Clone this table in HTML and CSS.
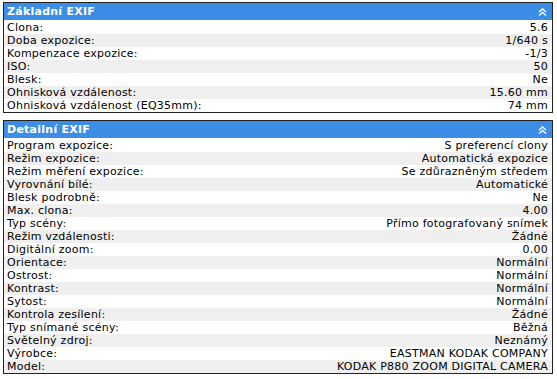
FILE: index.html
```html
<!DOCTYPE html>
<html lang="cs">
<head>
    <meta charset="UTF-8">
    <title>EXIF</title>
    <link rel="stylesheet" href="styles.css">
</head>
<body>
    <div class="panel">
        <div class="panel-head">
            <span>Základní EXIF</span>
            <svg class="fold" width="9" height="8" viewBox="0 0 9 8"><polyline points="1,4 4.5,1 8,4" /><polyline points="1,7.5 4.5,4.5 8,7.5" /></svg>
        </div>
        <table class="exif">
            <tr><td>Clona:</td><td>5.6</td></tr>
            <tr><td>Doba expozice:</td><td>1/640 s</td></tr>
            <tr><td>Kompenzace expozice:</td><td>-1/3</td></tr>
            <tr><td>ISO:</td><td>50</td></tr>
            <tr><td>Blesk:</td><td>Ne</td></tr>
            <tr><td>Ohnisková vzdálenost:</td><td>15.60 mm</td></tr>
            <tr><td>Ohnisková vzdálenost (EQ35mm):</td><td>74 mm</td></tr>
        </table>
    </div>
    <div class="panel">
        <div class="panel-head">
            <span>Detailní EXIF</span>
            <svg class="fold" width="9" height="8" viewBox="0 0 9 8"><polyline points="1,4 4.5,1 8,4" /><polyline points="1,7.5 4.5,4.5 8,7.5" /></svg>
        </div>
        <table class="exif">
            <tr><td>Program expozice:</td><td>S preferencí clony</td></tr>
            <tr><td>Režim expozice:</td><td>Automatická expozice</td></tr>
            <tr><td>Režim měření expozice:</td><td>Se zdůrazněným středem</td></tr>
            <tr><td>Vyrovnání bílé:</td><td>Automatické</td></tr>
            <tr><td>Blesk podrobně:</td><td>Ne</td></tr>
            <tr><td>Max. clona:</td><td>4.00</td></tr>
            <tr><td>Typ scény:</td><td>Přímo fotografovaný snímek</td></tr>
            <tr><td>Režim vzdálenosti:</td><td>Žádné</td></tr>
            <tr><td>Digitální zoom:</td><td>0.00</td></tr>
            <tr><td>Orientace:</td><td>Normální</td></tr>
            <tr><td>Ostrost:</td><td>Normální</td></tr>
            <tr><td>Kontrast:</td><td>Normální</td></tr>
            <tr><td>Sytost:</td><td>Normální</td></tr>
            <tr><td>Kontrola zesílení:</td><td>Žádné</td></tr>
            <tr><td>Typ snímané scény:</td><td>Běžná</td></tr>
            <tr><td>Světelný zdroj:</td><td>Neznámý</td></tr>
            <tr><td>Výrobce:</td><td>EASTMAN KODAK COMPANY</td></tr>
            <tr><td>Model:</td><td>KODAK P880 ZOOM DIGITAL CAMERA</td></tr>
        </table>
    </div>
</body>
</html>
```

FILE: styles.css
```css
* {
    margin: 0;
    padding: 0;
}
body {
    background-color: #fff;
    padding: 2px 4px 0 3px;
    font-family: "DejaVu Sans", Verdana, sans-serif;
    font-size: 11px;
    letter-spacing: 0.25px;
    color: #000;
}
.panel {
    border: 1px solid #222;
    margin-bottom: 7px;
}
.panel-head {
    height: 17px;
    background-color: #3c8de6;
    color: #fff;
    font-weight: bold;
    display: flex;
    align-items: center;
    justify-content: space-between;
    padding: 0 5px 0 3px;
}
.panel-head .fold polyline {
    fill: none;
    stroke: #fff;
    stroke-width: 1.4;
}
.exif {
    width: 100%;
    border-collapse: collapse;
    margin-top: 1px;
}
.exif td {
    height: 13px;
    line-height: 13px;
    padding: 0 4px 0 3px;
    white-space: nowrap;
}
.exif td + td {
    text-align: right;
}
.exif tr:nth-child(even) {
    background-color: #efefef;
}
```
